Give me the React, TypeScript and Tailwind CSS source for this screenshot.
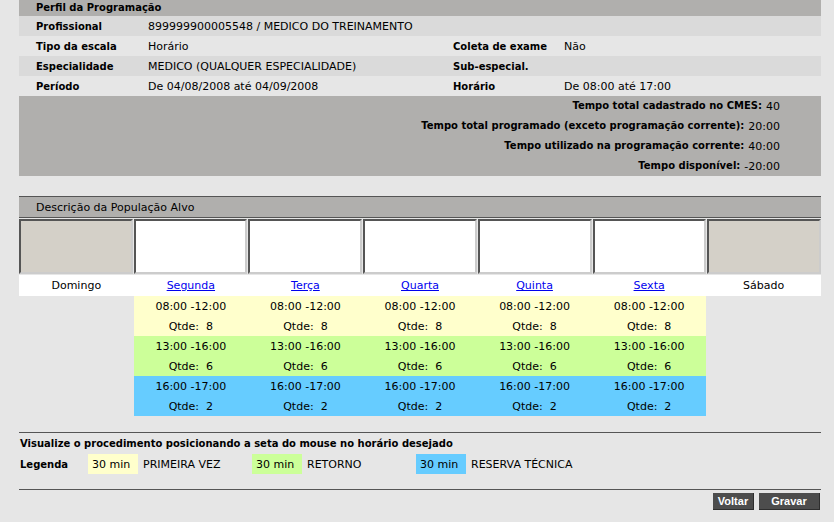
import React from 'react';

const dias = ['Domingo', 'Segunda', 'Terça', 'Quarta', 'Quinta', 'Sexta', 'Sábado'];

const faixas = [
  { horario: '08:00 -12:00', qtde: 8, cor: 'bg-[#ffffcc]' },
  { horario: '13:00 -16:00', qtde: 6, cor: 'bg-[#ccff99]' },
  { horario: '16:00 -17:00', qtde: 2, cor: 'bg-[#66ccff]' },
];

const legenda = [
  { cor: 'bg-[#ffffcc]', texto: 'PRIMEIRA VEZ' },
  { cor: 'bg-[#ccff99]', texto: 'RETORNO' },
  { cor: 'bg-[#66ccff]', texto: 'RESERVA TÉCNICA' },
];

function Label({ children }: { children: React.ReactNode }) {
  return <span className="font-bold text-[10px]">{children}</span>;
}

function Linha({ bg, cols }: { bg: string; cols: React.ReactNode[] }) {
  return (
    <div className={`grid grid-cols-[129px_305px_111px_1fr] h-[20px] items-center ${bg}`}>
      {cols.map((c, i) => (
        <div key={i} className={i === 0 ? 'pl-[17px]' : ''}>
          {c}
        </div>
      ))}
    </div>
  );
}

export default function App() {
  return (
    <div className="w-[834px] h-[522px] overflow-hidden bg-[#e6e6e6] text-black text-[11px] leading-none font-['DejaVu_Sans',sans-serif]">
      <div className="ml-[19px] w-[802px]">
        {/* perfil */}
        <div className="h-[16px] bg-[#b0afad] pl-[17px] flex items-center">
          <Label>Perfil da Programação</Label>
        </div>
        <div className="grid grid-cols-[129px_1fr] h-[20px] items-center bg-[#dadada]">
          <div className="pl-[17px]"><Label>Profissional</Label></div>
          <div>899999900005548 / MEDICO DO TREINAMENTO</div>
        </div>
        <Linha
          bg="bg-[#e6e6e6]"
          cols={[<Label>Tipo da escala</Label>, 'Horário', <Label>Coleta de exame</Label>, 'Não']}
        />
        <Linha
          bg="bg-[#dadada]"
          cols={[<Label>Especialidade</Label>, 'MEDICO (QUALQUER ESPECIALIDADE)', <Label>Sub-especial.</Label>, '']}
        />
        <Linha
          bg="bg-[#e6e6e6]"
          cols={[<Label>Período</Label>, 'De 04/08/2008 até 04/09/2008', <Label>Horário</Label>, 'De 08:00 até 17:00']}
        />

        {/* totais */}
        <div className="bg-[#b0afad] flex flex-col items-end pr-[41px]">
          {[
            ['Tempo total cadastrado no CMES:', '40'],
            ['Tempo total programado (exceto programação corrente):', '20:00'],
            ['Tempo utilizado na programação corrente:', '40:00'],
            ['Tempo disponível:', '-20:00'],
          ].map(([k, v]) => (
            <div key={k} className="h-[20px] flex items-center gap-[4px]">
              <Label>{k}</Label>
              <span>{v}</span>
            </div>
          ))}
        </div>

        <div className="h-[20px]" />

        {/* população alvo */}
        <div className="h-[22px] border-y border-[#555] bg-[#b0afad] pl-[17px] flex items-center">
          Descrição da População Alvo
        </div>
        <div className="grid grid-cols-7 gap-x-px py-px bg-[#e6e6e6]">
          {dias.map((d, i) => (
            <div
              key={d}
              className={`h-[55px] border-2 border-t-[#555] border-l-[#555] border-b-[#ccc] border-r-[#ccc] ${
                i === 0 || i === 6 ? 'bg-[#d4d0c8]' : 'bg-white'
              }`}
            />
          ))}
        </div>
        <div className="grid grid-cols-7 h-[21px] bg-white items-center text-center">
          {dias.map((d, i) =>
            i === 0 || i === 6 ? (
              <div key={d}>{d}</div>
            ) : (
              <div key={d}>
                <a href="#" className="text-[#0000ee] underline">{d}</a>
              </div>
            )
          )}
        </div>

        {/* horários */}
        {faixas.map((f) => (
          <div key={f.horario} className="grid grid-cols-7 text-center">
            <div />
            {[1, 2, 3, 4, 5].map((n) => (
              <div key={n} className={f.cor}>
                <div className="h-[20px] flex items-center justify-center">{f.horario}</div>
                <div className="h-[20px] flex items-center justify-center">Qtde:&nbsp; {f.qtde}</div>
              </div>
            ))}
            <div />
          </div>
        ))}

        <div className="h-[16px]" />

        {/* legenda */}
        <div className="border-t border-[#555] pt-px pl-px">
          <div className="h-[20px] flex items-center">
            <Label>Visualize o procedimento posicionando a seta do mouse no horário desejado</Label>
          </div>
          <div className="h-[20px] flex items-center">
            <div className="w-[68px]"><Label>Legenda</Label></div>
            {legenda.map((l) => (
              <div key={l.texto} className="flex items-center w-[164px]">
                <div className={`w-[50px] h-[20px] pl-[4px] flex items-center ${l.cor}`}>30 min</div>
                <div className="pl-[5px]">{l.texto}</div>
              </div>
            ))}
          </div>
        </div>

        <div className="h-[15px]" />

        <div className="border-t border-[#555] pt-[3px] pr-px flex justify-end gap-[5px]">
          <button className="w-[41px] h-[17px] bg-[#4d4d4d] border-b border-r border-[#2e2e2e] text-white font-bold text-[11px] font-['Liberation_Sans',sans-serif]">
            Voltar
          </button>
          <button className="w-[61px] h-[17px] bg-[#4d4d4d] border-b border-r border-[#2e2e2e] text-white font-bold text-[11px] font-['Liberation_Sans',sans-serif]">
            Gravar
          </button>
        </div>
      </div>
    </div>
  );
}
